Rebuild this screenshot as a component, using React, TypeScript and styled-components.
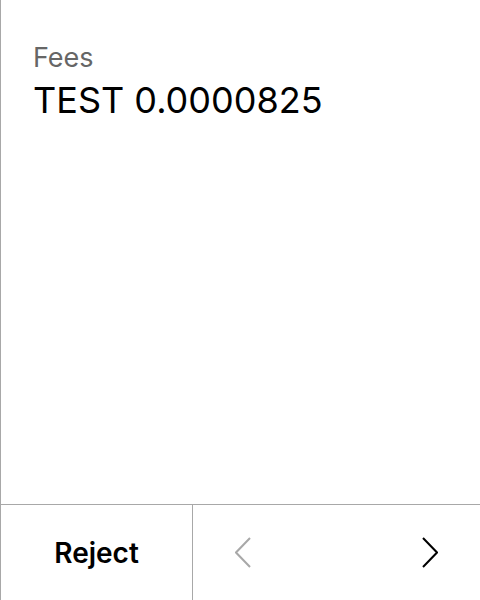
import React from "react";
import styled, { createGlobalStyle } from "styled-components";

const Global = createGlobalStyle`
  html, body { margin: 0; padding: 0; background: #fff; }
  body { font-family: Inter, "Noto Sans", sans-serif; }
`;

const Screen = styled.div`
  box-sizing: border-box;
  height: 600px;
  width: 480px;
  display: flex;
  flex-direction: column;
  border-left: 1px solid #a8a8a8;
`;

const Content = styled.div`
  flex: 1;
  padding: 42px 0 0 32px;
  display: flex;
  flex-direction: column;
  gap: 4px;
`;

const Label = styled.div`
  font-size: 27px;
  line-height: 32px;
  color: #666;
`;

const Value = styled.div`
  font-size: 36px;
  line-height: 44px;
  color: #000;
`;

const Footer = styled.div`
  box-sizing: border-box;
  height: 96px;
  border-top: 1px solid #a8a8a8;
  display: grid;
  grid-template-columns: 192px 1fr;
`;

const RejectButton = styled.button`
  border: none;
  background: none;
  border-right: 1px solid #a8a8a8;
  font-family: Inter, "Noto Sans", sans-serif;
  font-weight: 600;
  font-size: 28px;
  color: #000;
  padding: 0;
  cursor: pointer;
`;

const Nav = styled.div`
  display: flex;
  align-items: center;
  justify-content: space-between;
  padding: 0 42px;
`;

const NavButton = styled.button<{ $disabled?: boolean }>`
  border: none;
  background: none;
  padding: 0;
  display: flex;
  color: ${(p) => (p.$disabled ? "#a8a8a8" : "#000")};
`;

const Chevron = ({ dir }: { dir: "left" | "right" }) => (
  <svg width="16" height="31" viewBox="0 0 16 31" fill="none">
    <polyline
      points={dir === "left" ? "15,1 1,15.5 15,30" : "1,1 15,15.5 1,30"}
      stroke="currentColor"
      strokeWidth="2"
    />
  </svg>
);

export default function App() {
  return (
    <>
      <Global />
      <Screen>
        <Content>
          <Label>Fees</Label>
          <Value>TEST 0.0000825</Value>
        </Content>
        <Footer>
          <RejectButton>Reject</RejectButton>
          <Nav>
            <NavButton $disabled>
              <Chevron dir="left" />
            </NavButton>
            <NavButton>
              <Chevron dir="right" />
            </NavButton>
          </Nav>
        </Footer>
      </Screen>
    </>
  );
}
